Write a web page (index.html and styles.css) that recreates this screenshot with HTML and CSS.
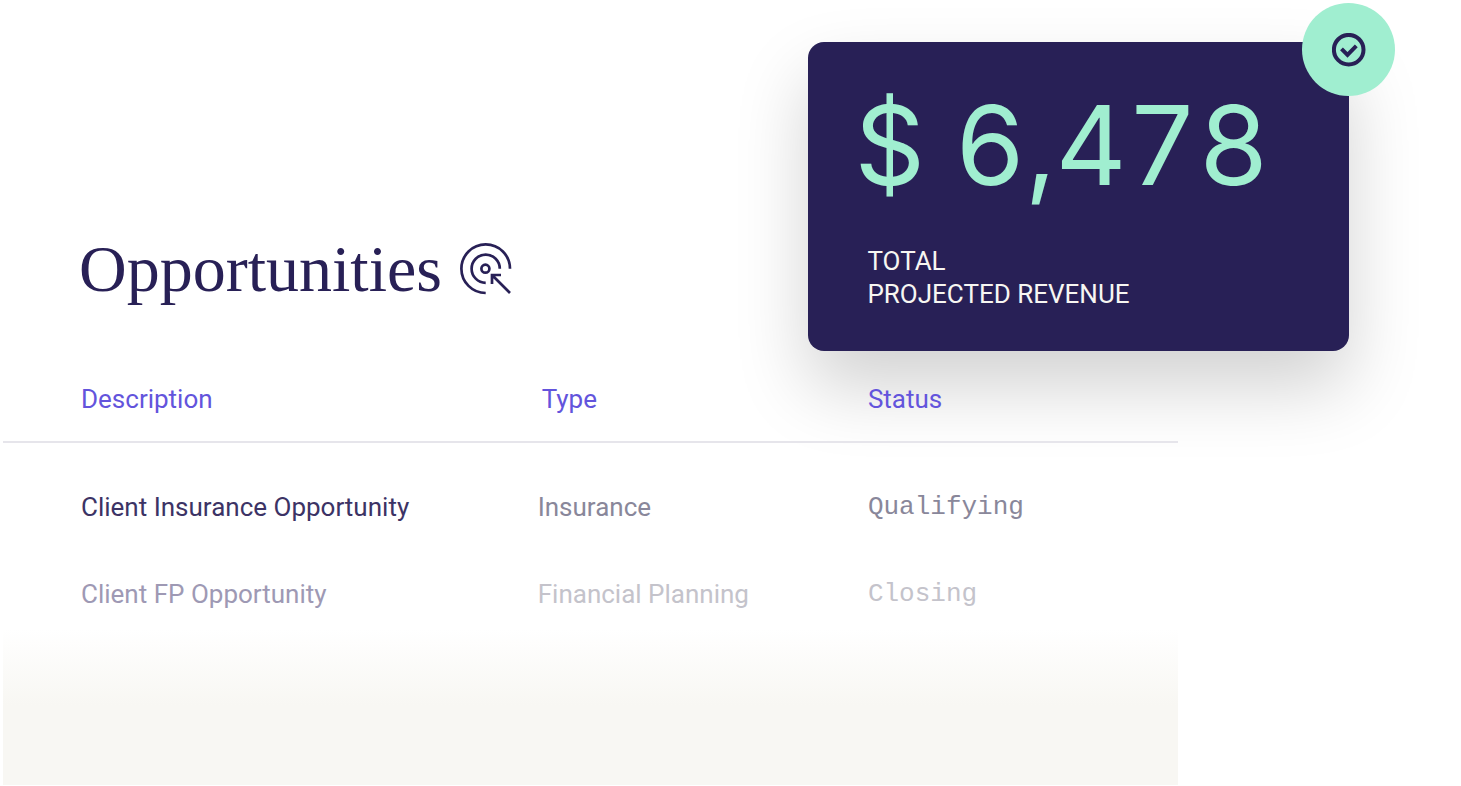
FILE: index.html
```html
<!DOCTYPE html>
<html lang="en">
<head>
<meta charset="utf-8">
<meta name="viewport" content="width=device-width, initial-scale=1">
<title>Opportunities</title>
<link rel="stylesheet" href="styles.css">
</head>
<body>
<main class="page">
  <aside class="revenue-card">
    <p class="revenue-amount">$ 6,478</p>
    <p class="revenue-label">TOTAL<br>PROJECTED REVENUE</p>
    <span class="badge">
      <svg class="badge-icon" viewBox="0 0 34 34" aria-hidden="true">
        <circle cx="16.7" cy="16.7" r="14.8"/>
        <path d="M9.5 15.8l6 6 8.8-9"/>
      </svg>
    </span>
  </aside>
  <section class="panel">
    <header class="panel-header">
      <h1 class="title">Opportunities</h1>
      <svg class="target-icon" viewBox="0 0 52 52" aria-hidden="true">
        <path d="M50 25.7A24.3 24.3 0 1 0 25.7 50"/>
        <path d="M39.8 25.7A14.1 14.1 0 1 0 25.7 39.8"/>
        <circle cx="25.4" cy="25.7" r="4"/>
        <path d="M50 50L32 32M32 41V32H41"/>
      </svg>
    </header>
    <table class="deals">
      <thead>
        <tr><th class="col-name">Description</th><th class="col-type">Type</th><th class="col-status">Status</th></tr>
      </thead>
      <tbody>
        <tr><td class="name">Client Insurance Opportunity</td><td>Insurance</td><td class="status">Qualifying</td></tr>
        <tr class="faded"><td class="name">Client FP Opportunity</td><td>Financial Planning</td><td class="status">Closing</td></tr>
      </tbody>
    </table>
    <div class="fade"></div>
  </section>
</main>
</body>
</html>
```
FILE: styles.css
```css
* { box-sizing: border-box; }
body {
  margin: 0;
  background: #fff;
  color: #282056;
  font-family: Roboto, "Liberation Sans", sans-serif;
  font-size: 26px;
  line-height: 32px;
}
.page {
  position: relative;
  min-height: 100vh;
  padding-left: 3px;
}
.panel {
  position: relative;
  display: flex;
  flex-direction: column;
  width: 80.6%;
  min-height: 100vh;
  padding-top: 232px;
}
.panel-header {
  display: flex;
  align-items: center;
  gap: 18px;
  height: 74px;
  padding-left: 76px;
}
.title {
  margin: 0;
  font-family: "Liberation Serif", serif;
  font-size: 66px;
  line-height: 78px;
  font-weight: 400;
}
.target-icon {
  width: 52px;
  height: 52px;
  fill: none;
  stroke: #282056;
  stroke-width: 2.7;
}
.deals {
  width: 100%;
  margin-top: 62px;
  border-collapse: separate;
  border-spacing: 0;
  table-layout: fixed;
}
.deals th {
  height: 75px;
  padding: 15px 0 0;
  border-bottom: 2px solid #e6e5eb;
  color: #6354dc;
  font-weight: 400;
  text-align: left;
  vertical-align: top;
}
.deals th:first-child,
.deals td:first-child { padding-left: 78px; }
.deals .col-name { width: 45.5%; }
.deals .col-type { width: 28.1%; padding-left: 4px; }
.deals td {
  height: 87px;
  padding: 40px 0 0;
  color: #89879a;
}
.deals .name { color: #3c3365; }
.deals .faded td { color: #c4c3cb; }
.deals .faded .name { color: #9e99b4; }
.deals .status {
  font-family: "Liberation Mono", monospace;
}
.fade {
  flex: 1;
  margin-bottom: 1px;
  background: linear-gradient(#fff 12px, #f8f7f3 88px);
}
.revenue-card {
  position: absolute;
  top: 42px;
  right: 112px;
  width: 37%;
  padding: 41px 46px 40px;
  border-radius: 16px;
  background: #282056;
  box-shadow: 0 36px 72px rgba(0, 0, 0, 0.18);
}
.revenue-amount {
  margin: 0;
  color: #a0eed0;
  font-family: Inter, sans-serif;
  font-size: 110px;
  font-variant-numeric: tabular-nums;
  line-height: 124px;
  white-space: nowrap;
}
.revenue-label {
  margin: 38px 0 0;
  padding-left: 13px;
  color: #f7f6f2;
  line-height: 33px;
}
.badge {
  position: absolute;
  top: -39px;
  right: -46px;
  display: grid;
  place-items: center;
  width: 93px;
  height: 93px;
  border-radius: 50%;
  background: #a0eed0;
}
.badge-icon {
  width: 34px;
  height: 34px;
  fill: none;
  stroke: #282056;
  stroke-width: 4;
}
```
